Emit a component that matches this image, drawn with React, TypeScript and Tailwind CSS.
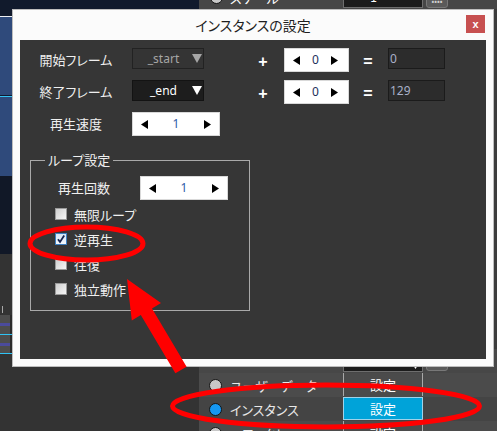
import React from "react";

type Dir = "l" | "r" | "d";

function Tri({ dir, color = "#000000", w = 7, h = 9 }: { dir: Dir; color?: string; w?: number; h?: number }) {
  const d =
    dir === "l"
      ? `M${w} 0V${h}L0 ${h / 2}Z`
      : dir === "r"
      ? `M0 0V${h}L${w} ${h / 2}Z`
      : `M0 0H${w}L${w / 2} ${h}Z`;
  return (
    <svg width={w} height={h} viewBox={`0 0 ${w} ${h}`} className="block shrink-0">
      <path d={d} fill={color} />
    </svg>
  );
}

function Spin({ value, wide, valueClass }: { value: string; wide?: boolean; valueClass: string }) {
  return (
    <div
      className={`${
        wide ? "w-[88px] pl-[8px] pr-[8px]" : "w-[65px] pl-[8px] pr-[10px]"
      } h-[24px] shrink-0 bg-white border border-[#d9d9d9] flex items-center justify-between`}
    >
      <Tri dir="l" w={7} h={9} />
      <span className={`text-[12px] leading-none font-['Noto_Sans',sans-serif] ${valueClass}`}>{value}</span>
      <Tri dir="r" w={7} h={9} />
    </div>
  );
}

function Combo({ text, active }: { text: string; active?: boolean }) {
  return (
    <div
      className={`w-[72px] h-[21px] shrink-0 border flex items-center ${
        active ? "bg-[#1d1d1d] border-[#131313] text-white" : "bg-[#343434] border-[#222222] text-[#a6a6a6]"
      }`}
    >
      <span className="flex-1 text-center text-[12px] leading-none pl-[2px] font-['Noto_Sans',sans-serif]">{text}</span>
      <span className="mr-[1px]">
        <Tri dir="d" w={10} h={9} color={active ? "#ffffff" : "#a6a6a6"} />
      </span>
    </div>
  );
}

function Output({ value }: { value: string }) {
  return (
    <div className="w-[57px] h-[21px] shrink-0 bg-[#2c2c2c] border border-[#1b1b1b] text-[#a9b1c9] text-[12px] leading-none flex items-center pl-[1px] font-['Noto_Sans',sans-serif]">
      {value}
    </div>
  );
}

function Sym({ ch }: { ch: string }) {
  return (
    <div className="w-[20px] h-[24px] pt-[3px] flex items-center justify-center text-white text-[16px] font-bold font-['Liberation_Sans',sans-serif]">
      {ch}
    </div>
  );
}

function FrameRow({ label, combo, active, result }: { label: string; combo: string; active?: boolean; result: string }) {
  return (
    <div className="flex items-start h-[24px]">
      <div className="w-[112px] h-[24px] leading-[24px] text-center text-[13px] text-[#efefef]">{label}</div>
      <Combo text={combo} active={active} />
      <div className="ml-[49px]">
        <Sym ch="+" />
      </div>
      <div className="ml-[11px]">
        <Spin value="0" valueClass="text-[#1d2f5c]" />
      </div>
      <div className="ml-[9px]">
        <Sym ch="=" />
      </div>
      <div className="ml-[10px]">
        <Output value={result} />
      </div>
    </div>
  );
}

function Check({ label, checked }: { label: string; checked?: boolean }) {
  return (
    <div className="h-[24px] flex items-center pl-[24px]">
      <div
        className={`w-[12px] h-[12px] shrink-0 border flex items-center justify-center ${
          checked
            ? "border-[#3d7fc1] bg-gradient-to-b from-[#d6e6f6] to-[#f4f8fc]"
            : "border-[#9a9a9a] bg-gradient-to-br from-[#cfcfcf] to-[#f6f6f6]"
        }`}
      >
        {checked && (
          <svg width="10" height="10" viewBox="0 0 10 10" className="block">
            <path d="M2 5.2L4 8L8.2 1.6" fill="none" stroke="#16244f" strokeWidth="1.8" />
          </svg>
        )}
      </div>
      <span className="ml-[7px] text-[13px] text-[#efefef] leading-none">{label}</span>
    </div>
  );
}

function Radio({ on }: { on?: boolean }) {
  return (
    <span
      className={`block w-[13px] h-[13px] shrink-0 rounded-full border border-[#151515] ${
        on ? "bg-[#1598f2]" : "bg-[#c8c8c8]"
      }`}
    />
  );
}

function PropRow({ bg, label, on, blue }: { bg: string; label: string; on?: boolean; blue?: boolean }) {
  return (
    <div className={`h-[24px] shrink-0 grid grid-cols-[144px_80px_1fr] items-start ${bg}`}>
      <div className="h-[24px] flex items-center pl-[10px] gap-[8px]">
        <Radio on={on} />
        <span className="text-[13px] text-[#e8e8e8] leading-none">{label}</span>
      </div>
      <div
        className={`h-[23px] border flex items-center justify-center text-[13px] text-white leading-none ${
          blue ? "bg-[#00a3d9] border-[#9fd3ea]" : "border-[#a9a9a9] border-t-0 border-b-0"
        }`}
      >
        設定
      </div>
      <div />
    </div>
  );
}

function LeftColumn() {
  return (
    <div className="w-[199px] shrink-0 flex flex-col">
      <div className="h-[16px] shrink-0 bg-[#111a2c]" />
      <div className="h-[1px] shrink-0 bg-[#eef0f4]" />
      <div className="h-[159px] shrink-0 bg-[#2f4a7b] flex flex-col">
        <div className="h-[78px] shrink-0" />
        <div className="h-[1px] shrink-0 bg-[#0f1a30]" />
        <div className="h-[1px] shrink-0 bg-[#35c4f5]" />
      </div>
      <div className="h-[78px] shrink-0 bg-[#111827]" />
      <div className="flex-1 bg-[#333333] flex flex-col">
        <div className="h-[52px] shrink-0" />
        <div className="h-[7px] w-px ml-[2px] shrink-0 bg-[#a8a8a8]" />
        <div className="h-[2px] shrink-0" />
        <div className="h-[19px] shrink-0 flex">
          <div className="w-[10px] bg-[#4d4d4d] flex flex-col">
            <div className="h-[8px]" />
            <div className="h-[3px] bg-[#4b4b9c]" />
          </div>
          <div className="w-[2px] bg-[#2a2a2a]" />
        </div>
        <div className="h-[1px] w-[12px] shrink-0 bg-[#2fc3f5]" />
        <div className="h-[18px] shrink-0 flex">
          <div className="w-[10px] bg-[#4d4d4d] flex flex-col">
            <div className="h-[8px]" />
            <div className="h-[3px] bg-[#4b4b9c]" />
          </div>
          <div className="w-[2px] bg-[#2a2a2a]" />
        </div>
        <div className="h-[1px] w-[12px] shrink-0 bg-[#2fc3f5]" />
      </div>
    </div>
  );
}

function RightColumn() {
  return (
    <div className="flex-1 flex flex-col bg-[#3c3c3c]">
      <div className="-mt-[15px] h-[24px] shrink-0 grid grid-cols-[144px_80px_1fr] items-center bg-[#464646]">
        <div className="flex items-center pl-[11px] gap-[7px]">
          <Radio />
          <span className="text-[13px] text-white leading-none">スケール</span>
        </div>
        <div className="h-[22px] bg-[#1c1c1c] border border-[#6e6e6e] flex items-center">
          <span className="flex-1 text-center text-white text-[12px] leading-none pr-[8px]">1</span>
          <span className="mr-[4px]">
            <Tri dir="d" w={7} h={6} color="#ffffff" />
          </span>
        </div>
        <div className="ml-[3px] w-[22px] h-[22px] rounded-[3px] bg-[#5a5a5a] border border-[#787878] flex items-end justify-center pb-[2px] text-[#d0d0d0] text-[8px] leading-none">
          ••••
        </div>
      </div>
      <div className="h-[340px] shrink-0" />
      <div className="h-[24px] shrink-0 grid grid-cols-[144px_80px_1fr] items-start bg-[#474747]">
        <div />
        <div className="h-[23px] bg-[#1c1c1c] border border-[#6e6e6e] flex items-end justify-end pr-[4px] pb-[2px]">
          <Tri dir="d" w={5} h={4} color="#ffffff" />
        </div>
        <div className="ml-[3px] w-[22px] h-[22px] rounded-[3px] bg-[#5a5a5a] border border-[#787878]" />
      </div>
      <PropRow bg="bg-[#4b4b4b]" label="ユーザーデータ" />
      <PropRow bg="bg-[#444444]" label="インスタンス" on blue />
      <PropRow bg="bg-[#4b4b4b]" label="エフェクト" />
    </div>
  );
}

function Panel() {
  return (
    <div className="flex-1 bg-[#363636] flex flex-col pt-[8px]">
      <FrameRow label="開始フレーム" combo="_start" result="0" />
      <div className="mt-[8px]">
        <FrameRow label="終了フレーム" combo="_end" active result="129" />
      </div>
      <div className="mt-[8px] flex items-start h-[24px]">
        <div className="w-[112px] h-[24px] leading-[24px] text-center text-[13px] text-[#efefef]">再生速度</div>
        <Spin value="1" wide valueClass="text-[#2f5aa6]" />
      </div>
      <fieldset className="mt-[15px] ml-[10px] w-[220px] h-[160px] border border-[#a9a9a9] p-0 m-0 flex flex-col">
        <legend className="ml-[14px] px-[3px] text-[13px] leading-[18px] text-[#efefef]">ループ設定</legend>
        <div className="mt-[7px] flex items-start h-[24px]">
          <div className="w-[106px] h-[24px] leading-[24px] text-center text-[13px] text-[#efefef]">再生回数</div>
          <div className="ml-[3px]">
            <Spin value="1" wide valueClass="text-[#2f5aa6]" />
          </div>
        </div>
        <div className="mt-[2px] flex flex-col gap-[1px]">
          <Check label="無限ループ" />
          <Check label="逆再生" checked />
          <Check label="往復" />
          <Check label="独立動作" />
        </div>
      </fieldset>
    </div>
  );
}

export default function App() {
  return (
    <div className="relative w-[497px] h-[431px] overflow-hidden bg-[#333333] [font-feature-settings:'palt'] font-['Noto_Sans_CJK_JP',sans-serif]">
      <div className="flex h-full">
        <LeftColumn />
        <RightColumn />
      </div>

      <div className="absolute left-[12px] top-[9px] w-[482px] h-[358px] border border-[#bdbdbd] bg-[#fbfbfb] flex flex-col px-[7px] pb-[7px]">
        <div className="h-[30px] shrink-0 grid grid-cols-[1fr_auto_1fr] items-center">
          <div />
          <div className="text-[14px] text-[#1e1e1e] leading-none">インスタンスの設定</div>
          <div className="justify-self-end self-start mt-[5px] mr-[1px] w-[19px] h-[18px] bg-[#c75050] flex items-center justify-center text-white text-[11px] font-bold leading-none font-['Liberation_Sans',sans-serif]">
            x
          </div>
        </div>
        <Panel />
      </div>

      <svg className="absolute inset-0 pointer-events-none" width="497" height="431" viewBox="0 0 497 431">
        <ellipse cx="86.5" cy="243.5" rx="56.5" ry="16.5" fill="none" stroke="#ff0000" strokeWidth="5" />
        <ellipse cx="326" cy="406" rx="153.5" ry="21" fill="none" stroke="#ff0000" strokeWidth="5" />
        <polygon
          points="127,279 161,303 152,308.4 186.6,366.7 175.4,373.3 140.8,315 131.8,320.4"
          fill="#ff0000"
        />
      </svg>
    </div>
  );
}
